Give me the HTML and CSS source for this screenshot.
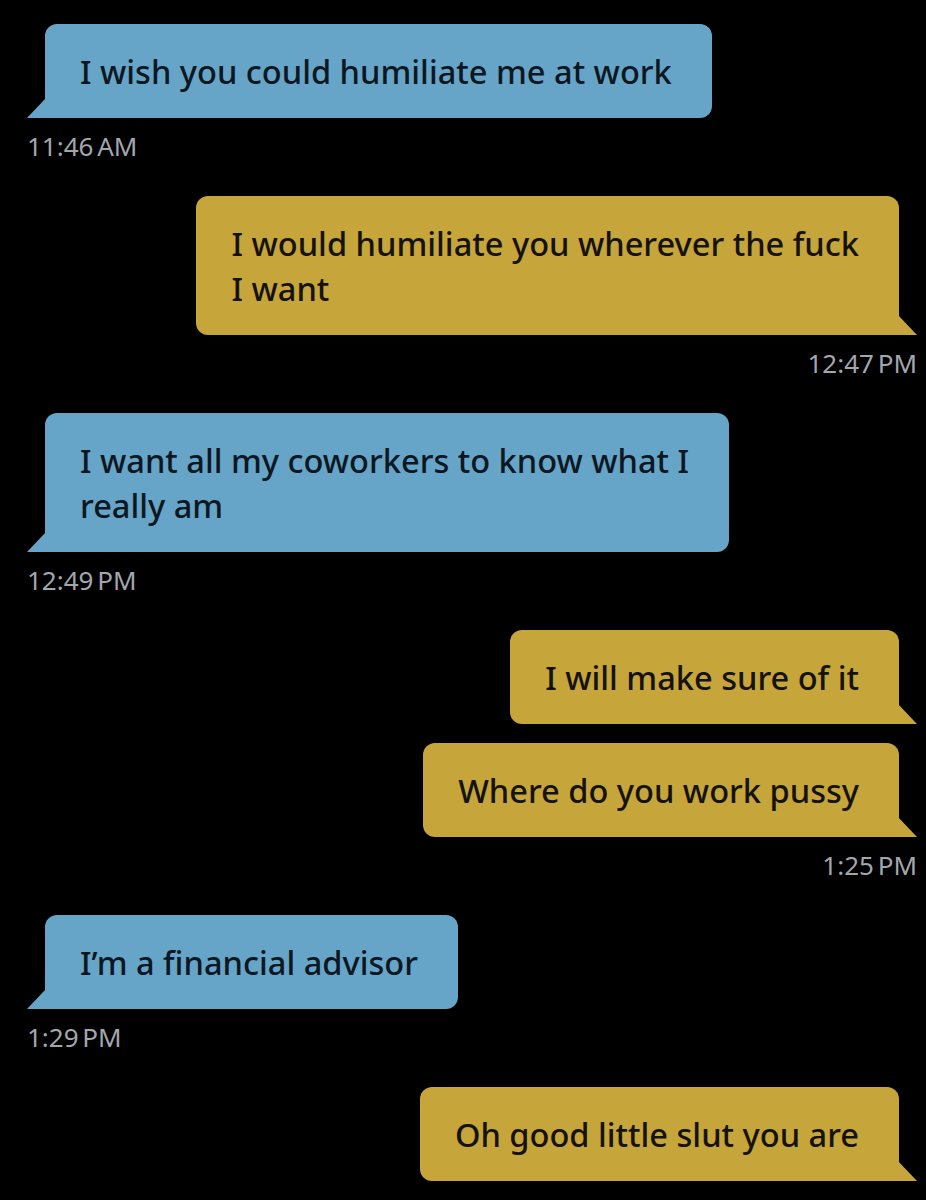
FILE: index.html
```html
<!DOCTYPE html>
<html>
<head>
<meta charset="utf-8">
<link rel="stylesheet" href="styles.css">
</head>
<body>
<div class="chat">
  <div class="group in">
    <div class="bubble tail">I wish you could humiliate me at work</div>
    <div class="time">11:46 AM</div>
  </div>
  <div class="group out">
    <div class="bubble tail">I would humiliate you wherever the fuck<br>I want</div>
    <div class="time">12:47 PM</div>
  </div>
  <div class="group in">
    <div class="bubble tail">I want all my coworkers to know what I<br>really am</div>
    <div class="time">12:49 PM</div>
  </div>
  <div class="group out">
    <div class="bubble tail">I will make sure of it</div>
    <div class="bubble tail">Where do you work pussy</div>
    <div class="time">1:25 PM</div>
  </div>
  <div class="group in">
    <div class="bubble tail">I’m a financial advisor</div>
    <div class="time">1:29 PM</div>
  </div>
  <div class="group out">
    <div class="bubble tail">Oh good little slut you are</div>
  </div>
</div>
</body>
</html>
```

FILE: styles.css
```css
html, body {
  margin: 0;
  padding: 0;
  background: #000;
}

.chat {
  padding: 24px 9px 0 27px;
  font-family: "Noto Sans", "Open Sans", sans-serif;
}

.group {
  display: flex;
  flex-direction: column;
  gap: 19px;
  margin-bottom: 34px;
}

.group.in { align-items: flex-start; }
.group.out { align-items: flex-end; }

.bubble {
  position: relative;
  font-size: 32.6px;
  font-weight: 500;
  line-height: 45px;
  padding: 24.5px 40px 24.5px 35px;
  white-space: nowrap;
}

.in .bubble {
  margin-left: 18px;
  background: #66a5c7;
  color: #0c1722;
  border-radius: 12px 12px 12px 0;
}

.out .bubble {
  margin-right: 18px;
  background: #c6a53a;
  color: #15120a;
  border-radius: 12px 12px 0 12px;
}

.tail::after {
  content: "";
  position: absolute;
  bottom: 0;
  width: 19px;
  height: 20px;
}

.in .tail::after {
  left: -18px;
  background: #66a5c7;
  clip-path: polygon(100% 0, 100% 100%, 0 100%);
}

.out .tail::after {
  right: -18px;
  background: #c6a53a;
  clip-path: polygon(0 0, 100% 100%, 0 100%);
}

.time {
  margin-top: -7px;
  font-size: 26px;
  line-height: 32px;
  word-spacing: -3px;
  color: #a3a6ad;
}
```
